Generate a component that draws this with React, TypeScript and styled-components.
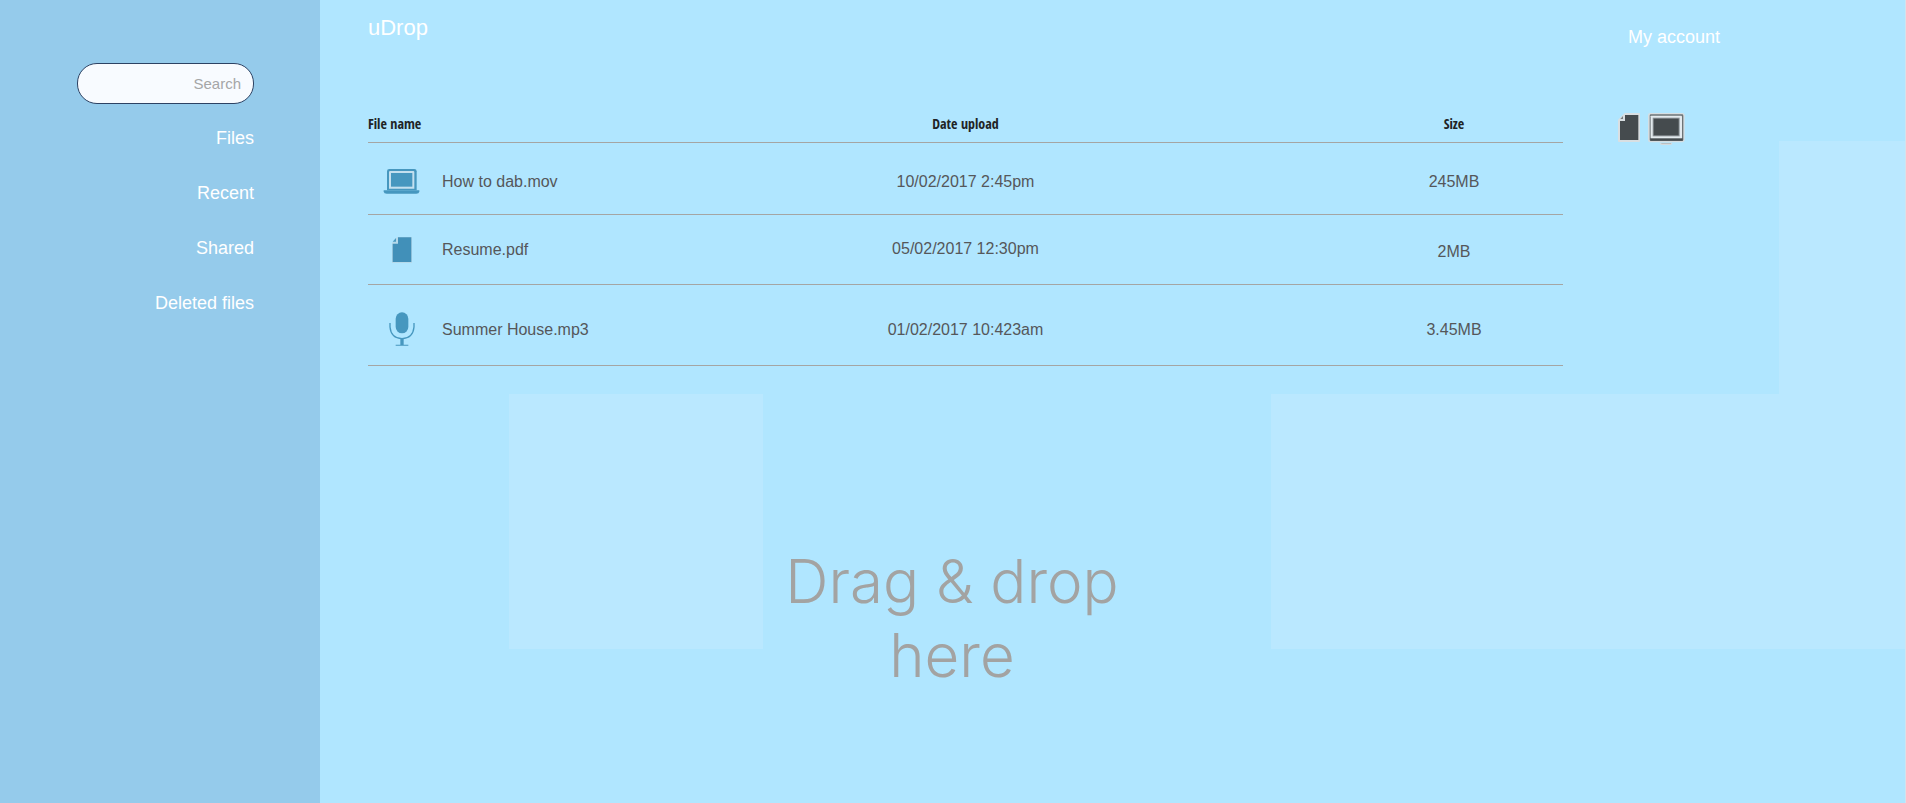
import React from "react";
import styled, { createGlobalStyle } from "styled-components";

const GlobalStyle = createGlobalStyle`
  *, *::before, *::after { box-sizing: border-box; }
  body {
    margin: 0;
    font-family: "Helvetica Neue", "Liberation Sans", Arial, sans-serif;
    font-size: 16px;
    line-height: 20px;
    color: #55575a;
  }
`;

const tile = "linear-gradient(#bae8ff, #bae8ff) no-repeat";

const Page = styled.div`
  display: grid;
  grid-template-columns: 320px minmax(0, 1fr) 321px;
  min-height: 100vh;
  border-right: 1px solid #d3e3ed;
  background:
    ${tile} 509px 394px / 254px 255px,
    ${tile} 1271px 394px / 100% 255px,
    ${tile} 1779px 141px / 100% 254px,
    #b0e6ff;
`;

const Sidebar = styled.aside`
  display: flex;
  flex-direction: column;
  align-items: flex-end;
  gap: 22px;
  padding: 63px 66px 0 0;
  background: #95cbeb;
`;

const SearchInput = styled.input`
  width: 177px;
  height: 41px;
  padding: 0 12px;
  border: 1px solid #2d4263;
  border-radius: 20px;
  background: #f8fbff;
  font: inherit;
  font-size: 15px;
  text-align: right;
  color: #555;
  &::placeholder { color: #a5a6a7; opacity: 1; }
`;

const Nav = styled.nav`
  display: flex;
  flex-direction: column;
  align-items: flex-end;
  gap: 31px;
`;

const TextLink = styled.a`
  font-size: 18px;
  line-height: 24px;
  color: #fff;
  text-decoration: none;
`;

const Main = styled.main`
  display: flex;
  flex-direction: column;
`;

const Title = styled.h1`
  margin: 0;
  padding: 14px 48px 0;
  font-size: 22px;
  font-weight: 400;
  line-height: 28px;
  color: #fff;
`;

const TableArea = styled.div`
  padding: 71px 21px 0 48px;
`;

const FileTable = styled.table`
  width: 100%;
  border-collapse: separate;
  border-spacing: 0;
  table-layout: fixed;
`;

const HeadCell = styled.th<{ $start?: boolean; $width?: number }>`
  width: ${(p) => (p.$width ? `${p.$width}px` : "auto")};
  padding: 0 0 8px;
  border-bottom: 1px solid #a5a5a3;
  font-family: "Open Sans Condensed", "Liberation Sans Narrow", "DejaVu Sans Condensed", sans-serif;
  font-size: 14px;
  font-weight: 700;
  line-height: 21px;
  text-align: ${(p) => (p.$start ? "left" : "center")};
  color: #212426;
`;

const Cell = styled.td<{ $top: number; $bottom?: number }>`
  padding: ${(p) => p.$top}px 0 ${(p) => p.$bottom ?? 0}px;
  border-bottom: 1px solid #a5a5a3;
  vertical-align: top;
  text-align: center;
`;

const FileName = styled.div`
  display: grid;
  grid-template-columns: 57px auto;
  column-gap: 17px;
  align-items: center;
  text-align: left;
  white-space: nowrap;
`;

const IconSlot = styled.span`
  display: flex;
  justify-content: center;
  padding-left: 10px;
`;

const DropZone = styled.section`
  display: flex;
  flex: 1;
  justify-content: center;
  padding-top: 178px;
`;

const DropText = styled.p`
  width: 360px;
  margin: 0;
  font-family: Inter, "Liberation Sans", Arial, sans-serif;
  font-size: 60px;
  font-weight: 300;
  line-height: 74px;
  text-align: center;
  color: #a3a3a2;
`;

const AccountPanel = styled.aside`
  display: flex;
  flex-direction: column;
  align-items: flex-start;
  gap: 64px;
  padding: 25px 0 0 34px;
`;

const AccountLink = styled(TextLink)`
  margin-left: 10px;
`;

const Toolbar = styled.div`
  display: flex;
  align-items: flex-start;
  gap: 8px;
`;

const IconButton = styled.button`
  display: flex;
  padding: 0;
  border: 0;
  background: none;
  cursor: pointer;
`;

const LaptopIcon = () => (
  <svg width="37" height="25" viewBox="0 0 111 75" aria-hidden="true">
    <path d="M19 0H94Q101 0 101 7V64H12V7Q12 0 19 0Z" fill="#4697bf" />
    <path d="M22 6H91Q94 6 94 9V59H18V9Q18 6 22 6Z" fill="#c3e0ef" />
    <rect x="24" y="12" width="64" height="41" fill="#4697bf" />
    <path d="M2 64H109V68Q108 74 100 74H11Q3 74 2 68Z" fill="#4697bf" />
  </svg>
);

const DocumentIcon = () => (
  <svg width="20" height="26" viewBox="0 0 60 78" aria-hidden="true">
    <path d="M16 0H60V78H0V17Z" fill="#b5d9ea" />
    <path d="M18 1H58V75H2V20H18Z" fill="#4190b9" />
    <path d="M12 3V14H2Z" fill="#4b9ac0" />
  </svg>
);

const MicrophoneIcon = () => (
  <svg width="26" height="35" viewBox="0 0 78 105" aria-hidden="true">
    <rect x="20" y="1" width="38" height="63" rx="19" fill="#4697bf" />
    <path d="M3 33V45Q6 79 39 80Q72 79 75 45V33" fill="none" stroke="#4697bf" strokeWidth="4" />
    <path d="M34 80H44V98H58V101H20V98H34Z" fill="#4697bf" />
  </svg>
);

const NewFileIcon = () => (
  <svg width="22" height="29" viewBox="0 0 66 87" aria-hidden="true">
    <path d="M20 0H63Q66 0 66 3V84Q66 87 63 87H3Q0 87 0 84V20Z" fill="#d9dfe2" />
    <path d="M21 6H61V81H6V24H21Z" fill="#454b4e" />
    <path d="M15 9V18H7Z" fill="#777d80" />
  </svg>
);

const MonitorIcon = () => (
  <svg width="37" height="33" viewBox="0 0 111 99" aria-hidden="true">
    <rect x="0" y="0" width="110" height="88" rx="7" fill="#d5dee2" />
    <rect x="5" y="4" width="101" height="80" rx="4" fill="#6d7477" />
    <rect x="7" y="76" width="97" height="7" fill="#454b4e" />
    <rect x="8" y="8" width="94" height="68" rx="2" fill="#e3eaee" />
    <rect x="14" y="14" width="81" height="56" fill="#8d9498" />
    <rect x="17" y="17" width="75" height="50" fill="#454b4e" />
    <path d="M35 89H73Q73 96 66 96H42Q35 96 35 89Z" fill="#d4dade" />
    <rect x="40" y="90" width="29" height="3" fill="#b9c0c3" />
  </svg>
);

const files = [
  { name: "How to dab.mov", date: "10/02/2017 2:45pm", size: "245MB", Icon: LaptopIcon, iconTop: 26, top: 29, sizeTop: 29, bottom: 20 },
  { name: "Resume.pdf", date: "05/02/2017 12:30pm", size: "2MB", Icon: DocumentIcon, iconTop: 22, top: 24, sizeTop: 27, bottom: 21 },
  { name: "Summer House.mp3", date: "01/02/2017 10:423am", size: "3.45MB", Icon: MicrophoneIcon, iconTop: 27, top: 35, sizeTop: 35, bottom: 18 },
];

export default function App() {
  return (
    <>
      <GlobalStyle />
      <Page>
        <Sidebar>
          <SearchInput type="text" placeholder="Search" aria-label="Search" />
          <Nav>
            {["Files", "Recent", "Shared", "Deleted files"].map((label) => (
              <TextLink key={label} href="#">{label}</TextLink>
            ))}
          </Nav>
        </Sidebar>
        <Main>
          <Title>uDrop</Title>
          <TableArea>
            <FileTable>
              <thead>
                <tr>
                  <HeadCell scope="col" $start $width={218}>File name</HeadCell>
                  <HeadCell scope="col">Date upload</HeadCell>
                  <HeadCell scope="col" $width={218}>Size</HeadCell>
                </tr>
              </thead>
              <tbody>
                {files.map(({ name, date, size, Icon, iconTop, top, sizeTop, bottom }) => (
                  <tr key={name}>
                    <Cell $top={iconTop} $bottom={bottom}>
                      <FileName>
                        <IconSlot><Icon /></IconSlot>
                        {name}
                      </FileName>
                    </Cell>
                    <Cell $top={top}>{date}</Cell>
                    <Cell $top={sizeTop}>{size}</Cell>
                  </tr>
                ))}
              </tbody>
            </FileTable>
          </TableArea>
          <DropZone aria-label="Upload area">
            <DropText>Drag &amp; drop here</DropText>
          </DropZone>
        </Main>
        <AccountPanel>
          <AccountLink href="#">My account</AccountLink>
          <Toolbar>
            <IconButton type="button" aria-label="New file"><NewFileIcon /></IconButton>
            <IconButton type="button" aria-label="Computer"><MonitorIcon /></IconButton>
          </Toolbar>
        </AccountPanel>
      </Page>
    </>
  );
}
